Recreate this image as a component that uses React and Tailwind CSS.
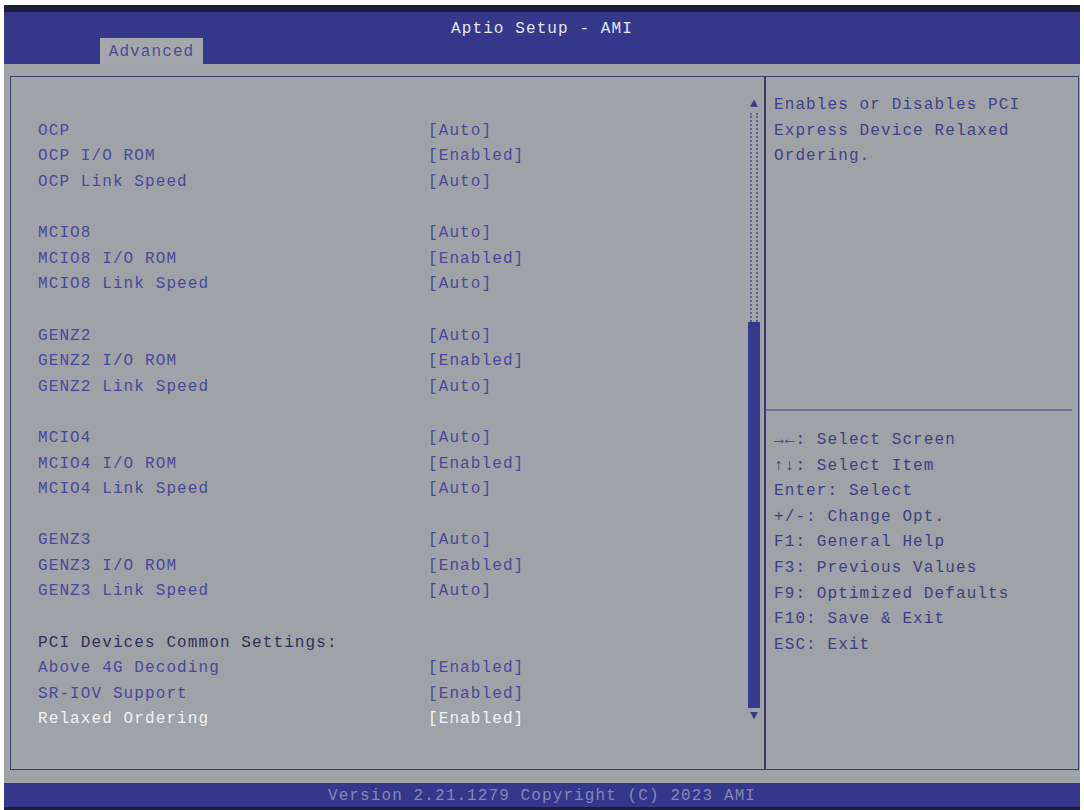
import React from 'react'

const rows = [
  ['OCP', '[Auto]'],
  ['OCP I/O ROM', '[Enabled]'],
  ['OCP Link Speed', '[Auto]'],
  null,
  ['MCIO8', '[Auto]'],
  ['MCIO8 I/O ROM', '[Enabled]'],
  ['MCIO8 Link Speed', '[Auto]'],
  null,
  ['GENZ2', '[Auto]'],
  ['GENZ2 I/O ROM', '[Enabled]'],
  ['GENZ2 Link Speed', '[Auto]'],
  null,
  ['MCIO4', '[Auto]'],
  ['MCIO4 I/O ROM', '[Enabled]'],
  ['MCIO4 Link Speed', '[Auto]'],
  null,
  ['GENZ3', '[Auto]'],
  ['GENZ3 I/O ROM', '[Enabled]'],
  ['GENZ3 Link Speed', '[Auto]'],
  null,
  ['PCI Devices Common Settings:', '', 'heading'],
  ['Above 4G Decoding', '[Enabled]'],
  ['SR-IOV Support', '[Enabled]'],
  ['Relaxed Ordering', '[Enabled]', 'selected'],
]

const keys = [
  '→←: Select Screen',
  '↑↓: Select Item',
  'Enter: Select',
  '+/-: Change Opt.',
  'F1: General Help',
  'F3: Previous Values',
  'F9: Optimized Defaults',
  'F10: Save & Exit',
  'ESC: Exit',
]

const SettingRow = ({ row }) => {
  if (!row) return <div className="h-[25.6px]" />
  const [label, value, kind] = row
  const color =
    kind === 'selected' ? 'text-[#f2f2f6]' : kind === 'heading' ? 'text-[#2f3156]' : 'text-[#464a9c]'
  return (
    <div className={`flex h-[25.6px] items-center ${color}`}>
      <span className="w-[390px] whitespace-pre">{label}</span>
      <span className="whitespace-pre">{value}</span>
    </div>
  )
}

export default function App() {
  return (
    <div className="w-[1084px] h-[810px] bg-white pt-[5px] px-[4px] font-['Liberation_Mono','DejaVu_Sans_Mono',monospace] text-[16px] tracking-[1.1px]">
      <div className="h-[805px] flex flex-col bg-[#9fa2a7] border-t-[7px] border-b-[3px] border-[#1d1e3c]">
        {/* header */}
        <div className="h-[52px] bg-[#34378a] flex flex-col">
          <div className="h-[26px] pt-[4px] leading-[26px] text-center text-[#e6e7f0]">Aptio Setup - AMI</div>
          <div className="h-[26px] flex">
            <div className="ml-[96px] w-[103px] bg-[#a4a7ab] text-[#4a4e95] text-center leading-[28px]">Advanced</div>
          </div>
        </div>

        <div className="h-[12px]" />

        {/* main panel */}
        <div className="h-[694px] ml-[6px] mr-[1px] border border-[#3b3d66] flex">
          <div className="w-[755px] flex border-r-2 border-[#3b3d66]">
            <div className="flex-1 pt-[41px] pl-[27px]">
              {rows.map((r, i) => (
                <SettingRow key={i} row={r} />
              ))}
            </div>
            <div className="w-[12px] mr-[4px] pt-[18px] flex flex-col items-center">
              <div className="h-[18px] text-[13px] leading-[18px] text-[#34378a] tracking-normal">▲</div>
              <div className="h-[209px] w-[8px] border-x-2 border-dotted border-[#5b5f9c]" />
              <div className="h-[386px] w-[12px] bg-[#363a8c]" />
              <div className="h-[16px] text-[13px] leading-[16px] text-[#34378a] tracking-normal">▼</div>
            </div>
          </div>

          <div className="flex-1 flex flex-col">
            <div className="h-[332px] pt-[16px] pl-[8px] text-[#3f4387] leading-[25.6px]">
              <div>Enables or Disables PCI</div>
              <div>Express Device Relaxed</div>
              <div>Ordering.</div>
            </div>
            <div className="mr-[6px] border-t-2 border-[#6d6f8e]" />
            <div className="pt-[17px] pl-[8px] text-[#3d4184] leading-[25.6px]">
              {keys.map((k) => (
                <div key={k} className="whitespace-pre">{k}</div>
              ))}
            </div>
          </div>
        </div>

        <div className="h-[13px]" />

        {/* footer */}
        <div className="h-[24px] bg-[#34378a] text-center leading-[26px] text-[#8588b6]">
          Version 2.21.1279 Copyright (C) 2023 AMI
        </div>
      </div>
    </div>
  )
}
